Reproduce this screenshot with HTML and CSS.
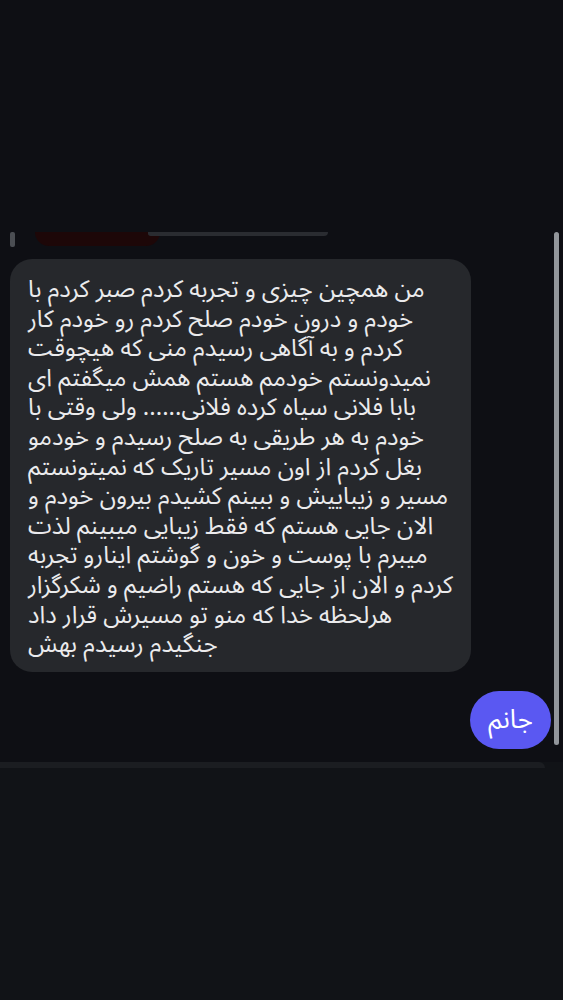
FILE: index.html
```html
<!DOCTYPE html>
<html lang="fa">
<head>
	<meta charset="utf-8">
	<title>Chat</title>
	<link rel="stylesheet" href="styles.css">
</head>
<body>
	<div class="topGap"></div>
	<div class="thread">
		<div class="feed">
			<!-- tail of the previous message, cut off -->
			<div class="peek">
				<div class="peekGrip"></div>
				<div class="peekBlob"></div>
				<div class="peekEdge"></div>
			</div>

			<div class="bubble incoming" dir="rtl">
				من همچین چیزی و تجربه کردم صبر کردم با<br>
				خودم و درون خودم صلح کردم رو خودم کار<br>
				کردم و به آگاهی رسیدم منی که هیچوقت<br>
				نمیدونستم خودمم هستم همش میگفتم ای<br>
				بابا فلانی سیاه کرده فلانی...... ولی وقتی با<br>
				خودم به هر طریقی به صلح رسیدم و خودمو<br>
				بغل کردم از اون مسیر تاریک که نمیتونستم<br>
				مسیر و زیباییش و ببینم کشیدم بیرون خودم و<br>
				الان جایی هستم که فقط زیبایی میبینم لذت<br>
				میبرم با پوست و خون و گوشتم اینارو تجربه<br>
				کردم و الان از جایی که هستم راضیم و شکرگزار<br>
				هرلحظه خدا که منو تو مسیرش قرار داد<br>
				جنگیدم رسیدم بهش
			</div>

			<div class="outRow">
				<div class="bubble outgoing" dir="rtl">جانم</div>
			</div>
		</div>
		<div class="scrollThumb"></div>
	</div>
	<div class="dock">
		<div class="dockEdge"></div>
	</div>
</body>
</html>
```

FILE: styles.css
```css
body {
	margin: 0;
	background: #0e0f14;
	font-family: "Noto Sans Arabic", "DejaVu Sans", sans-serif;
	color: #ebebed;
}

div.topGap {
	height: 232px;
}

div.thread {
	display: flex;
	align-items: flex-start;
}

div.feed {
	flex: 1;
	padding: 0 3px 0 10px;
}

div.peek {
	display: flex;
	align-items: flex-start;
	height: 15px;
}

div.peekGrip {
	width: 5px;
	height: 15px;
	border-radius: 2px;
	background: #4b4e53;
}

div.peekBlob {
	width: 125px;
	height: 14px;
	margin-left: 20px;
	border-radius: 0 0 14px 14px;
	background: #1d0708;
}

div.peekEdge {
	width: 180px;
	height: 4px;
	margin-left: -12px;
	border-radius: 0 0 6px 4px;
	background: #2a2c31;
}

div.bubble {
	border-radius: 22px;
}

div.incoming {
	width: 425px;
	margin-top: 12px;
	padding: 16px 18px 12px 18px;
	background: #26282c;
	font-size: 24px;
	line-height: 29.6px;
	text-align: left;
	white-space: nowrap;
}

div.outRow {
	display: flex;
	justify-content: flex-end;
	margin-top: 19px;
}

div.outgoing {
	width: 81px;
	height: 58px;
	border-radius: 29px;
	background: #5a58f2;
	color: #fff;
	font-size: 26px;
	line-height: 58px;
	text-align: center;
}

div.scrollThumb {
	width: 5px;
	height: 513px;
	margin-right: 4px;
	border-radius: 3px;
	background: #92969b;
}

div.dock {
	height: 238px;
	margin-top: 13px;
	background: #111317;
}

div.dockEdge {
	width: 545px;
	height: 6px;
	border-radius: 0 18px 0 0;
	background: #1b1d21;
}
```
